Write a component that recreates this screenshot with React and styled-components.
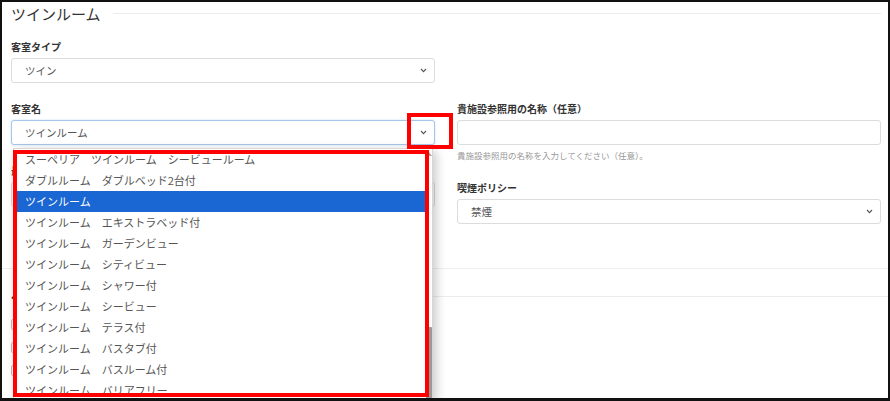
import React from 'react';
import styled, { createGlobalStyle } from 'styled-components';

const GlobalStyle = createGlobalStyle`
    html, body {
        margin: 0;
        padding: 0;
        background: #fff;
    }
    * {
        box-sizing: border-box;
    }
`;

const Frame = styled.div`
    position: relative;
    width: 890px;
    height: 401px;
    border: 2px solid #111;
    border-bottom-width: 3px;
    background: #fff;
    overflow: hidden;
    font-family: "Noto Sans CJK JP", "Noto Sans", sans-serif;
    color: #333;
`;

const Content = styled.div`
    padding: 0 7px 0 9px;
`;

const Header = styled.div`
    display: flex;
    align-items: center;
    height: 23px;
`;

const Title = styled.h2`
    margin: 0;
    font-size: 15px;
    font-weight: 400;
    line-height: 23px;
    color: #333;
`;

const Rule = styled.div`
    flex: 1;
    height: 1px;
    margin-left: ${p => p.gap || 12}px;
    background: #ececec;
`;

const Columns = styled.div`
    display: grid;
    grid-template-columns: 424px 424px;
    column-gap: 22px;
    margin-top: 15px;
`;

const Column = styled.div`
    padding-top: ${p => p.offset || 0}px;
`;

const Group = styled.div`
    margin-bottom: ${p => (p.mb === undefined ? 19 : p.mb)}px;
`;

const Label = styled.div`
    font-size: 10px;
    font-weight: 700;
    line-height: 14px;
    margin-bottom: 4px;
    color: #333;
`;

const Help = styled.div`
    margin-top: 4px;
    font-size: 8.5px;
    line-height: 12px;
    color: #999;
`;

const SelectWrap = styled.div`
    position: relative;
`;

const Field = styled.div`
    display: flex;
    align-items: center;
    justify-content: space-between;
    height: 25px;
    padding: 0 7px 0 13px;
    border: 1px solid ${p => (p.focused ? '#a8c6ea' : '#dcdcdc')};
    border-radius: 3px;
    box-shadow: ${p => (p.focused ? '0 0 2px rgba(80,140,220,0.35)' : 'none')};
    font-size: 10.5px;
    color: #555;
    background: #fff;
`;

const Chevron = () => (
    <svg width="7" height="5" viewBox="0 0 7 5">
        <polyline points="1,1 3.5,3.6 6,1" fill="none" stroke="#555" strokeWidth="1.1" />
    </svg>
);

const Divider = styled.div`
    height: 1px;
    background: #efefef;
    margin: ${p => p.mt || 0}px -7px 0 -9px;
`;

const SectionHead = styled.div`
    display: flex;
    align-items: center;
    height: 14px;
    margin-top: 20px;
    margin-right: -7px;
`;

const SectionLabel = styled.span`
    font-size: 10px;
    font-weight: 700;
    color: #333;
`;

const CheckRow = styled.div`
    display: flex;
    align-items: center;
    gap: 6px;
    margin-top: ${p => p.mt || 8}px;
    font-size: 10px;
    color: #555;
`;

const Check = styled.span`
    width: 11px;
    height: 11px;
    border: 1px solid #bbb;
    border-radius: 2px;
`;

const Dropdown = styled.div`
    position: absolute;
    top: 28px;
    left: 2px;
    width: 420px;
    height: 252px;
    display: flex;
    background: #fff;
    border: 1px solid #d6d6d6;
    box-shadow: 3px 3px 10px rgba(0, 0, 0, 0.22);
    z-index: 2;
`;

const OptionList = styled.ul`
    flex: 1;
    margin: 0;
    padding: 0;
    list-style: none;
    overflow: hidden;
`;

const Option = styled.li`
    height: 21px;
    line-height: 21px;
    padding-left: 11px;
    font-size: 11px;
    white-space: nowrap;
    color: ${p => (p.selected ? '#fff' : '#555')};
    background: ${p => (p.selected ? '#1a66d2' : 'transparent')};
`;

const ScrollTrack = styled.div`
    width: 7px;
    display: flex;
    flex-direction: column;
    align-items: center;
    background: #fff;
`;

const ScrollArrow = styled.span`
    margin-top: 3px;
    width: 0;
    height: 0;
    border-left: 3px solid transparent;
    border-right: 3px solid transparent;
    border-bottom: 4px solid #a3a3a3;
`;

const ScrollThumb = styled.span`
    margin-top: auto;
    width: 6px;
    height: 72px;
    background: #9a9a9a;
    border-radius: 1px;
`;

const Highlight = styled.div`
    position: absolute;
    left: ${p => p.x}px;
    top: ${p => p.y}px;
    width: ${p => p.w}px;
    height: ${p => p.h}px;
    border: 4px solid #f00;
    z-index: 3;
    pointer-events: none;
`;

const roomNames = [
    'スーペリア　ツインルーム　シービュールーム',
    'ダブルルーム　ダブルベッド2台付',
    'ツインルーム',
    'ツインルーム　エキストラベッド付',
    'ツインルーム　ガーデンビュー',
    'ツインルーム　シティビュー',
    'ツインルーム　シャワー付',
    'ツインルーム　シービュー',
    'ツインルーム　テラス付',
    'ツインルーム　バスタブ付',
    'ツインルーム　バスルーム付',
    'ツインルーム　バリアフリー',
    'ツインルーム　バルコニー付',
];

function SelectField({ value, focused, children }) {
    return (
        <SelectWrap>
            <Field focused={focused}>
                <span>{value}</span>
                {value !== undefined && <Chevron />}
            </Field>
            {children}
        </SelectWrap>
    );
}

export default function App() {
    const selected = 'ツインルーム';
    return (
        <>
            <GlobalStyle />
            <Frame>
                <Content>
                    <Header>
                        <Title>ツインルーム</Title>
                        <Rule />
                    </Header>
                    <Columns>
                        <Column>
                            <Group>
                                <Label>客室タイプ</Label>
                                <SelectField value="ツイン" />
                            </Group>
                            <Group>
                                <Label>客室名</Label>
                                <SelectField value={selected} focused>
                                    <Dropdown>
                                        <OptionList>
                                            {roomNames.map(name => (
                                                <Option key={name} selected={name === selected}>
                                                    {name}
                                                </Option>
                                            ))}
                                        </OptionList>
                                        <ScrollTrack>
                                            <ScrollArrow />
                                            <ScrollThumb />
                                        </ScrollTrack>
                                    </Dropdown>
                                </SelectField>
                            </Group>
                            <Group mb={0}>
                                <Label>最大定員</Label>
                                <SelectField value="2" />
                            </Group>
                        </Column>
                        <Column offset={62}>
                            <Group mb={20}>
                                <Label>貴施設参照用の名称（任意）</Label>
                                <Field />
                                <Help>貴施設参照用の名称を入力してください（任意）。</Help>
                            </Group>
                            <Group mb={0}>
                                <Label>喫煙ポリシー</Label>
                                <SelectField value="禁煙" />
                            </Group>
                        </Column>
                    </Columns>
                    <Divider mt={44} />
                    <SectionHead>
                        <SectionLabel>ベッドタイプ</SectionLabel>
                        <Rule gap={10} />
                    </SectionHead>
                    <CheckRow mt={14}><Check />シングルベッド</CheckRow>
                    <CheckRow><Check />セミダブルベッド</CheckRow>
                    <CheckRow><Check />ダブルベッド</CheckRow>
                </Content>
                <Highlight x={405} y={111} w={46} h={36} />
                <Highlight x={11} y={148} w={416} h={247} />
            </Frame>
        </>
    );
}
